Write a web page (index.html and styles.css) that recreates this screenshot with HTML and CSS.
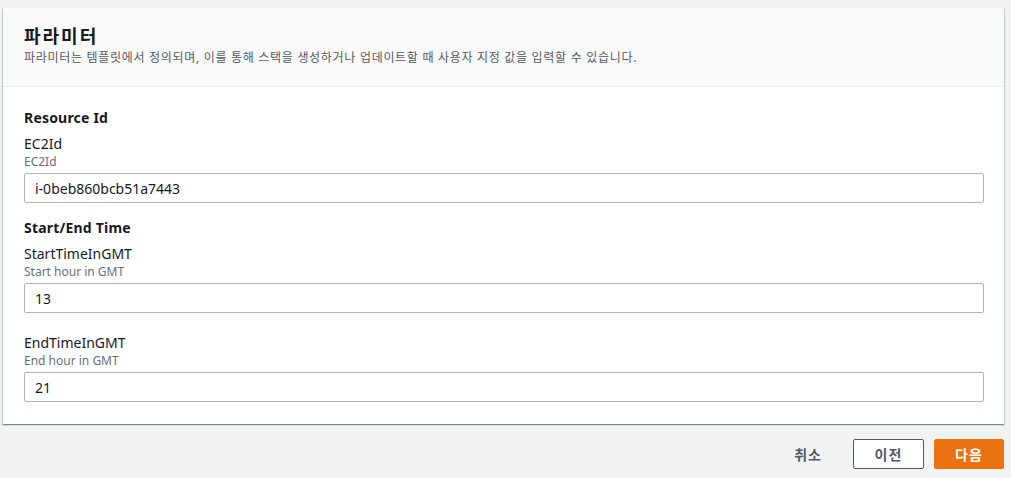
FILE: index.html
```html
<!DOCTYPE html>
<html lang="ko">
  <head>
    <meta charset="UTF-8" />
    <meta name="viewport" content="width=device-width, initial-scale=1.0" />
    <title>파라미터</title>
    <link rel="stylesheet" href="styles.css">
  </head>
  <body>
    <div class="container">
      <div class="header">
        <h2>파라미터</h2>
        <p class="desc">파라미터는 템플릿에서 정의되며, 이를 통해 스택을 생성하거나 업데이트할 때 사용자 지정 값을 입력할 수 있습니다.</p>
      </div>
      <div class="content">
        <div class="group">
          <h3>Resource Id</h3>
          <div class="field">
            <label>EC2Id</label>
            <div class="hint">EC2Id</div>
            <input type="text" value="i-0beb860bcb51a7443">
          </div>
        </div>
        <div class="group">
          <h3>Start/End Time</h3>
          <div class="field">
            <label>StartTimeInGMT</label>
            <div class="hint">Start hour in GMT</div>
            <input type="text" value="13">
          </div>
          <div class="field">
            <label>EndTimeInGMT</label>
            <div class="hint">End hour in GMT</div>
            <input type="text" value="21">
          </div>
        </div>
      </div>
    </div>
    <div class="actions">
      <button class="cancel">취소</button>
      <button class="prev">이전</button>
      <button class="next">다음</button>
    </div>
  </body>
</html>
```

FILE: styles.css
```css
body {
  margin: 0;
  padding: 8px 7px 0 3px;
  background: #f2f3f3;
  font-family: "Noto Sans", "Noto Sans CJK KR", sans-serif;
  color: #16191f;
}
.container {
  background: white;
  box-shadow: 0 1px 1px 0 rgba(0, 28, 36, 0.3), 1px 1px 1px 0 rgba(0, 28, 36, 0.15), -1px 1px 1px 0 rgba(0, 28, 36, 0.15);
}
.header {
  background: #fafafa;
  border-bottom: 1px solid #eaeded;
  padding: 16px 21px 17px;
  height: 45px;
}
.header h2 {
  margin: 0;
  font-size: 18px;
  line-height: 24px;
  font-weight: 700;
  letter-spacing: 2px;
}
.desc {
  margin: 2px 0 0;
  font-size: 12px;
  line-height: 16px;
  color: #545b64;
  letter-spacing: 0.7px;
}
.content {
  padding: 20px 20px 22px 21px;
}
.group h3 {
  margin: 0 0 5px;
  font-size: 14px;
  line-height: 22px;
  font-weight: 700;
  letter-spacing: 0.2px;
}
.group + .group {
  margin-top: 14px;
}
.field {
  display: flex;
  flex-direction: column;
}
.field + .field {
  margin-top: 20px;
}
.field label {
  font-size: 14px;
  line-height: 20px;
}
.hint {
  font-size: 12px;
  line-height: 16px;
  color: #687078;
  margin-bottom: 3px;
}
.field input {
  box-sizing: border-box;
  height: 30px;
  padding: 4px 10px;
  border: 1px solid #aab7b8;
  border-radius: 2px;
  font-family: inherit;
  font-size: 14px;
  color: #16191f;
  background: white;
}
.actions {
  display: flex;
  justify-content: flex-end;
  align-items: center;
  gap: 10px;
  padding-top: 15px;
}
button {
  box-sizing: border-box;
  height: 30px;
  padding: 0 20px;
  border-radius: 2px;
  font-family: inherit;
  font-size: 14px;
  font-weight: 700;
  letter-spacing: 1px;
  cursor: pointer;
}
.cancel {
  border: 1px solid transparent;
  background: transparent;
  color: #545b64;
}
.prev {
  width: 71px;
  border: 1px solid #545b64;
  background: white;
  color: #545b64;
}
.next {
  width: 70px;
  border: 1px solid #ec7211;
  background: #ec7211;
  color: white;
}
```
